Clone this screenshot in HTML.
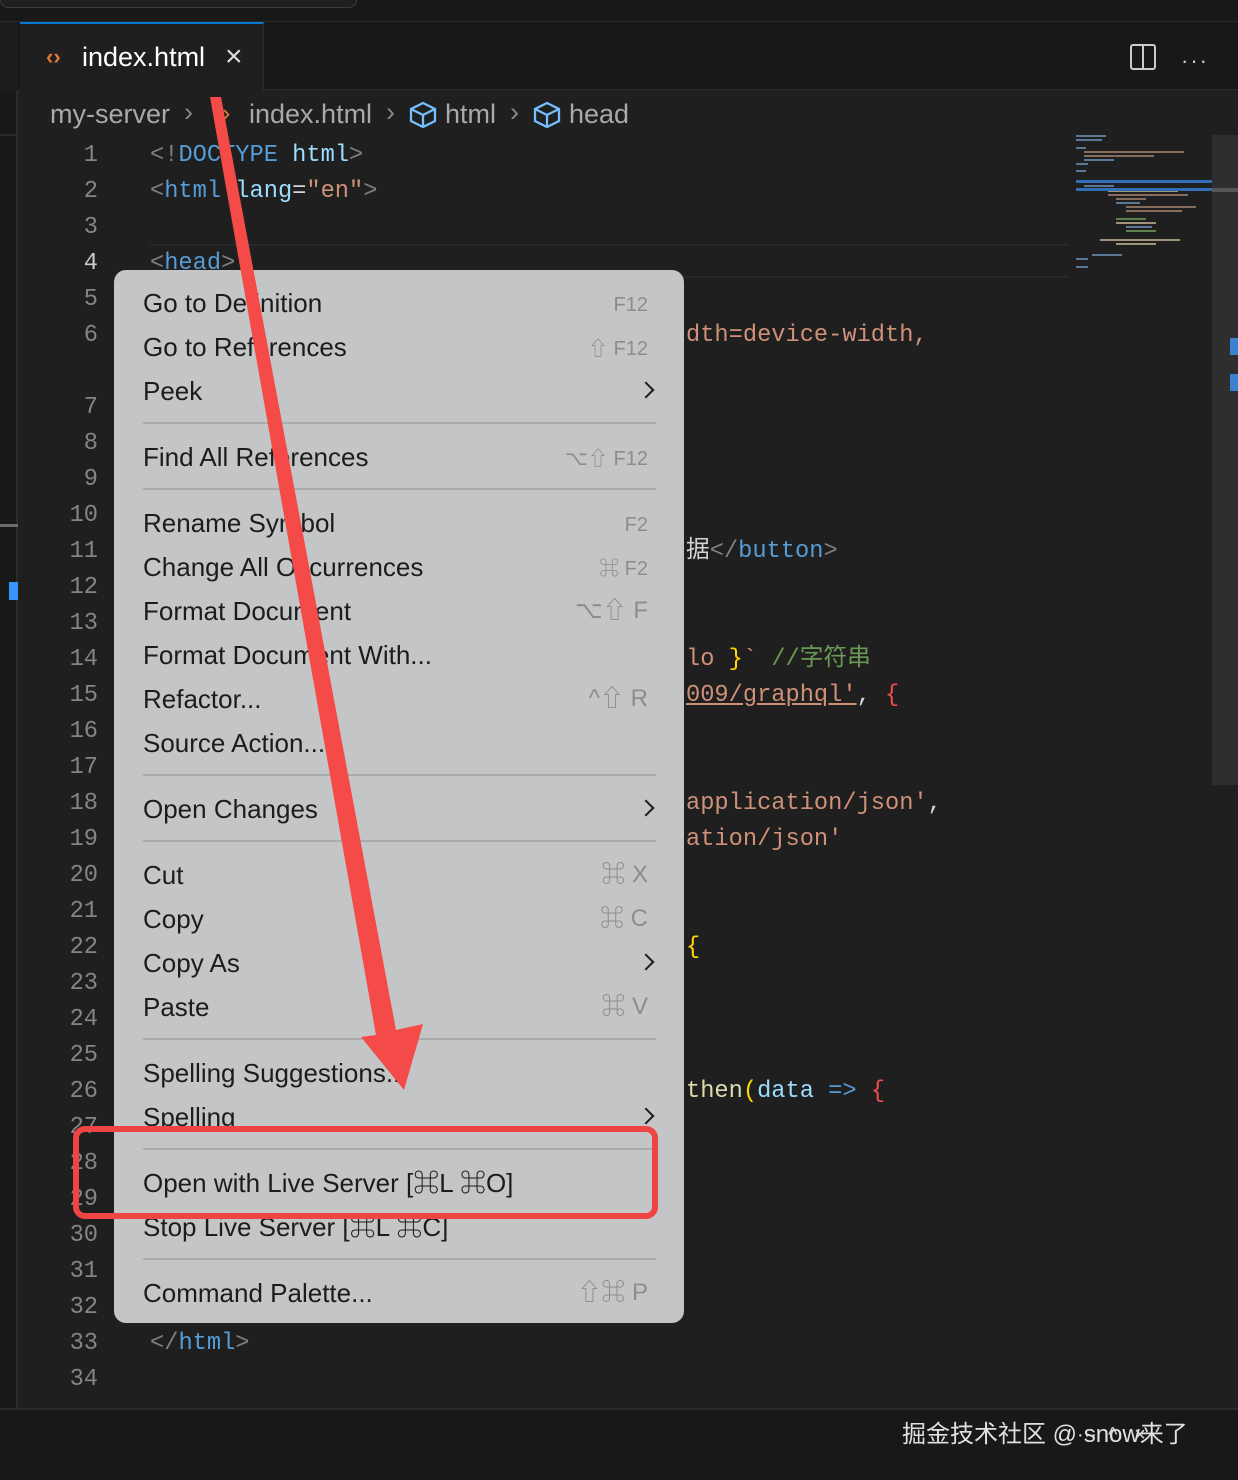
<!DOCTYPE html>
<html><head><meta charset="utf-8"><style>
*{margin:0;padding:0;box-sizing:border-box}
body{width:1238px;height:1480px;background:#1f1f1f;position:relative;overflow:hidden;font-family:"Liberation Sans","Noto Sans CJK SC",sans-serif}
.a{position:absolute;white-space:pre}
.mono{position:absolute;left:0;top:3px;width:1238px;font-family:"Liberation Mono","Noto Sans CJK SC",monospace;font-size:23.7px;line-height:30px}
.ln{position:absolute;left:40px;width:58px;text-align:right;color:#858585}
.mi{position:absolute;left:143px;font-size:26px;line-height:30px;color:#1c1c1c}
.sc{position:absolute;right:590px;font-size:20px;line-height:30px;color:#8b8d8f;text-align:right}
.sep{position:absolute;left:143px;width:513px;height:2px;background:#a9abad}
.chev{position:absolute;left:640px;width:12px;height:12px;border-right:2.5px solid #1c1c1c;border-top:2.5px solid #1c1c1c;transform:rotate(45deg)}
.g{color:#808080}.b{color:#569cd6}.lb{color:#9cdcfe}.s{color:#ce9178}.y{color:#ffd700}.c{color:#6a9955}.w{color:#d4d4d4}.o{color:#f14c4c}
.bc{font-size:27px;color:#a9a9a9}
</style></head><body>
<div class="a" style="left:0;top:0;width:1238px;height:22px;background:#181818;border-bottom:1px solid #2b2b2b"></div>
<div class="a" style="left:0;top:-10px;width:357px;height:18px;background:#1f1f1f;border:1px solid #3c3c3c;border-radius:8px"></div>
<div class="a" style="left:0;top:22px;width:1238px;height:68px;background:#181818;border-bottom:1px solid #2b2b2b"></div>
<div class="a" style="left:0;top:90px;width:18px;height:1318px;background:#181818;border-right:2px solid #2b2b2b"></div>
<div class="a" style="left:0;top:22px;width:18px;height:68px;background:#1c1c1c"></div>
<div class="a" style="left:20px;top:22px;width:244px;height:69px;background:#1f1f1f;border-top:2px solid #0078d4;border-right:1px solid #2b2b2b"></div>
<div class="a" style="left:46px;top:44px;font-size:22px;color:#e37933;font-weight:bold">‹›</div>
<div class="a" style="left:82px;top:42px;font-size:27px;color:#fff">index.html</div>
<div class="a" style="left:225px;top:40px;font-size:30px;color:#ddd">×</div>
<div class="a" style="left:1130px;top:44px;width:26px;height:26px;border:2px solid #ccc;border-radius:3px"></div>
<div class="a" style="left:1142px;top:44px;width:2px;height:26px;background:#ccc"></div>
<div class="a" style="left:1181px;top:48px;font-size:22px;color:#ccc;letter-spacing:2px">···</div>
<div class="a" style="left:0;top:134px;width:18px;height:2px;background:#2b2b2b"></div>
<div class="a" style="left:0;top:524px;width:18px;height:3px;background:#6b6b6b"></div>
<div class="a" style="left:9px;top:582px;width:9px;height:18px;background:#3794ff"></div>
<div class="a bc" style="left:50px;top:99px">my-server</div><div class="a bc" style="left:184px;top:97px;color:#888">›</div>
<div class="a" style="left:222px;top:99px;font-size:25px;color:#e37933">›</div>
<div class="a bc" style="left:249px;top:99px">index.html</div><div class="a bc" style="left:386px;top:97px;color:#888">›</div>
<svg class="a" style="left:408px;top:101px" width="30" height="28" viewBox="0 0 30 28"><path d="M15 2 L27 8 L27 20 L15 26 L3 20 L3 8 Z M3 8 L15 14 L27 8 M15 14 L15 26" fill="none" stroke="#75beff" stroke-width="2.3"/></svg>
<div class="a bc" style="left:445px;top:99px">html</div><div class="a bc" style="left:510px;top:97px;color:#888">›</div>
<svg class="a" style="left:532px;top:101px" width="30" height="28" viewBox="0 0 30 28"><path d="M15 2 L27 8 L27 20 L15 26 L3 20 L3 8 Z M3 8 L15 14 L27 8 M15 14 L15 26" fill="none" stroke="#75beff" stroke-width="2.3"/></svg>
<div class="a bc" style="left:569px;top:99px">head</div>
<div class="a" style="left:150px;top:244px;width:918px;height:34px;border-top:2px solid #282828;border-bottom:2px solid #282828"></div>
<div class="mono">
<div class="ln" style="top:138px">1</div><div class="ln" style="top:174px">2</div><div class="ln" style="top:210px">3</div><div class="ln" style="top:246px;color:#ccc">4</div><div class="ln" style="top:282px">5</div><div class="ln" style="top:318px">6</div>
<div class="ln" style="top:390px">7</div><div class="ln" style="top:426px">8</div><div class="ln" style="top:462px">9</div><div class="ln" style="top:498px">10</div><div class="ln" style="top:534px">11</div><div class="ln" style="top:570px">12</div><div class="ln" style="top:606px">13</div><div class="ln" style="top:642px">14</div><div class="ln" style="top:678px">15</div><div class="ln" style="top:714px">16</div><div class="ln" style="top:750px">17</div><div class="ln" style="top:786px">18</div><div class="ln" style="top:822px">19</div><div class="ln" style="top:858px">20</div><div class="ln" style="top:894px">21</div><div class="ln" style="top:930px">22</div><div class="ln" style="top:966px">23</div><div class="ln" style="top:1002px">24</div><div class="ln" style="top:1038px">25</div><div class="ln" style="top:1074px">26</div><div class="ln" style="top:1110px">27</div><div class="ln" style="top:1146px">28</div><div class="ln" style="top:1182px">29</div><div class="ln" style="top:1218px">30</div><div class="ln" style="top:1254px">31</div><div class="ln" style="top:1290px">32</div><div class="ln" style="top:1326px">33</div><div class="ln" style="top:1362px">34</div>
<div class="a" style="left:150px;top:138px"><span class="g">&lt;!</span><span class="b">DOCTYPE</span> <span class="lb">html</span><span class="g">&gt;</span></div>
<div class="a" style="left:150px;top:174px"><span class="g">&lt;</span><span class="b">html</span> <span class="lb">lang</span><span class="w">=</span><span class="s">"en"</span><span class="g">&gt;</span></div>
<div class="a" style="left:150px;top:246px"><span class="g">&lt;</span><span class="b">head</span><span class="g">&gt;</span></div>
<div class="a s" style="left:686px;top:318px">dth=device-width,</div>
<div class="a" style="left:686px;top:534px"><span class="w">据</span><span class="g">&lt;/</span><span class="b">button</span><span class="g">&gt;</span></div>
<div class="a" style="left:686px;top:642px"><span class="s">lo </span><span class="y">}</span><span class="s">`</span> <span class="c">//字符串</span></div>
<div class="a" style="left:686px;top:678px"><span class="s" style="text-decoration:underline">009/graphql'</span><span class="w">, </span><span class="o">{</span></div>
<div class="a" style="left:686px;top:786px"><span class="s">application/json'</span><span class="w">,</span></div>
<div class="a s" style="left:686px;top:822px">ation/json'</div>
<div class="a y" style="left:686px;top:930px">{</div>
<div class="a" style="left:686px;top:1074px"><span style="color:#dcdcaa">then</span><span class="y">(</span><span class="lb">data</span> <span class="b">=&gt;</span> <span class="o">{</span></div>
<div class="a" style="left:150px;top:1326px"><span class="g">&lt;/</span><span class="b">html</span><span class="g">&gt;</span></div>
</div>
<svg class="a" style="left:1070px;top:130px" width="142" height="150">
<g fill="#6c8fb5" opacity=".8">
<rect x="6" y="5" width="30" height="2"/><rect x="6" y="9" width="26" height="2"/>
<rect x="6" y="17" width="10" height="2"/><rect x="14" y="21" width="100" height="2" fill="#a0806a"/><rect x="14" y="25" width="70" height="2" fill="#a0806a"/><rect x="14" y="29" width="30" height="2"/><rect x="6" y="33" width="12" height="2"/>
<rect x="6" y="40" width="10" height="2"/><rect x="14" y="55" width="30" height="2"/>
<rect x="38" y="60" width="70" height="2" fill="#c0b090"/><rect x="38" y="64" width="80" height="2" fill="#a0806a"/><rect x="46" y="68" width="30" height="2" fill="#a0806a"/><rect x="46" y="72" width="24" height="2"/><rect x="56" y="76" width="70" height="2" fill="#a0806a"/><rect x="56" y="80" width="56" height="2" fill="#a0806a"/><rect x="46" y="88" width="30" height="2" fill="#6a9955"/><rect x="46" y="92" width="40" height="2" fill="#c0b090"/><rect x="56" y="96" width="26" height="2"/><rect x="56" y="100" width="30" height="2" fill="#6a9955"/><rect x="30" y="109" width="80" height="2" fill="#c0b090"/><rect x="46" y="113" width="40" height="2" fill="#c0b090"/><rect x="22" y="124" width="30" height="2"/><rect x="6" y="128" width="12" height="2"/><rect x="6" y="136" width="12" height="2"/></g>
<rect x="6" y="50" width="136" height="3" fill="#2f6fb7"/><rect x="6" y="58" width="136" height="3" fill="#2f6fb7"/>
</svg>
<div class="a" style="left:1212px;top:135px;width:26px;height:650px;background:#2e2e2e"></div>
<div class="a" style="left:1212px;top:188px;width:26px;height:4px;background:#555"></div>
<div class="a" style="left:1230px;top:338px;width:8px;height:17px;background:#3d80d0"></div>
<div class="a" style="left:1230px;top:374px;width:8px;height:17px;background:#3d80d0"></div>
<div class="a" style="left:0;top:1408px;width:1238px;height:72px;background:#181818;border-top:2px solid #2b2b2b"></div>
<div class="a" style="left:902px;top:1414px;font-size:24px;color:#e0e0e0">掘金技术社区 @ snow来了</div>
<div class="a" style="left:1077px;top:1424px;font-size:20px;color:#ddd">···&nbsp;&nbsp;^&nbsp;&nbsp;&nbsp;×</div>
<div class="a" style="left:114px;top:270px;width:570px;height:1053px;background:#c3c5c6;border-radius:12px"></div>
<div class="mi" style="top:288px">Go to Definition</div><div class="sc" style="top:290px">F12</div>
<div class="mi" style="top:332px">Go to References</div><div class="sc" style="top:334px">⇧ F12</div>
<div class="mi" style="top:376px">Peek</div><div class="chev" style="top:384px"></div>
<div class="sep" style="top:422px"></div>
<div class="mi" style="top:442px">Find All References</div><div class="sc" style="top:444px">⌥⇧ F12</div>
<div class="sep" style="top:488px"></div>
<div class="mi" style="top:508px">Rename Symbol</div><div class="sc" style="top:510px">F2</div>
<div class="mi" style="top:552px">Change All Occurrences</div><div class="sc" style="top:554px">⌘ F2</div>
<div class="mi" style="top:596px">Format Document</div><div class="sc" style="top:596px;font-size:24px">⌥⇧ F</div>
<div class="mi" style="top:640px">Format Document With...</div>
<div class="mi" style="top:684px">Refactor...</div><div class="sc" style="top:684px;font-size:24px">^⇧ R</div>
<div class="mi" style="top:728px">Source Action...</div>
<div class="sep" style="top:774px"></div>
<div class="mi" style="top:794px">Open Changes</div><div class="chev" style="top:802px"></div>
<div class="sep" style="top:840px"></div>
<div class="mi" style="top:860px">Cut</div><div class="sc" style="top:860px;font-size:24px">⌘ X</div>
<div class="mi" style="top:904px">Copy</div><div class="sc" style="top:904px;font-size:24px">⌘ C</div>
<div class="mi" style="top:948px">Copy As</div><div class="chev" style="top:956px"></div>
<div class="mi" style="top:992px">Paste</div><div class="sc" style="top:992px;font-size:24px">⌘ V</div>
<div class="sep" style="top:1038px"></div>
<div class="mi" style="top:1058px">Spelling Suggestions...</div>
<div class="mi" style="top:1102px">Spelling</div><div class="chev" style="top:1110px"></div>
<div class="sep" style="top:1148px"></div>
<div class="mi" style="top:1168px">Open with Live Server [⌘L ⌘O]</div>
<div class="mi" style="top:1212px">Stop Live Server [⌘L ⌘C]</div>
<div class="sep" style="top:1258px"></div>
<div class="mi" style="top:1278px">Command Palette...</div><div class="sc" style="top:1278px;font-size:24px">⇧⌘ P</div>
<svg class="a" style="left:0;top:0" width="1238" height="1480">
<rect x="76" y="1129" width="579" height="87" rx="9" fill="none" stroke="#ef4444" stroke-width="6"/>
<polygon points="210,97 221,97 396,1030 423,1024 404,1090 361,1037 376,1035" fill="#f44b48"/>
</svg>
</body></html>
